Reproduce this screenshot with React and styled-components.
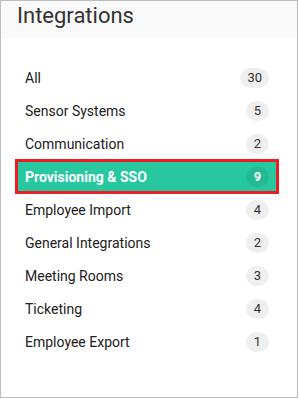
import React from "react";
import styled, { createGlobalStyle } from "styled-components";

const categories = [
  { name: "All", count: 30 },
  { name: "Sensor Systems", count: 5 },
  { name: "Communication", count: 2 },
  { name: "Provisioning & SSO", count: 9, active: true },
  { name: "Employee Import", count: 4 },
  { name: "General Integrations", count: 2 },
  { name: "Meeting Rooms", count: 3 },
  { name: "Ticketing", count: 4 },
  { name: "Employee Export", count: 1 },
];

function App() {
  return (
    <>
      <GlobalStyle />
      <S.Panel>
        <S.Header>
          <S.Title>Integrations</S.Title>
        </S.Header>
        <S.List>
          {categories.map((c) => (
            <S.Row key={c.name} active={c.active}>
              <S.Label>{c.name}</S.Label>
              <S.Badge active={c.active}>{c.count}</S.Badge>
            </S.Row>
          ))}
        </S.List>
      </S.Panel>
    </>
  );
}

const GlobalStyle = createGlobalStyle`
  body {
    margin: 0;
    background: #fff;
    font-family: Roboto, "Liberation Sans", sans-serif;
  }
`;

const S = {
  Panel: styled.div`
    width: 298px;
    height: 398px;
    box-sizing: border-box;
    border: 1px solid #bdbdbd;
    display: flex;
    flex-direction: column;
  `,
  Header: styled.div`
    height: 37px;
    box-sizing: border-box;
    background: #f9f9f9;
    padding: 0 0 8px 16px;
    display: flex;
    align-items: center;
  `,
  Title: styled.h1`
    margin: 0;
    font-size: 22px;
    line-height: 26px;
    font-weight: 400;
    color: #333;
  `,
  List: styled.ul`
    list-style: none;
    margin: 0;
    padding: 23px 19px 0 15px;
    display: flex;
    flex-direction: column;
  `,
  Row: styled.li`
    height: 33px;
    display: flex;
    align-items: center;
    justify-content: space-between;
    padding: 0 9px;
    font-size: 14px;
    color: ${(p) => (p.active ? "#fff" : "#212121")};
    font-weight: ${(p) => (p.active ? 700 : 400)};
    background: ${(p) => (p.active ? "#27c7a0" : "transparent")};
    outline: ${(p) => (p.active ? "3px solid #ee1c25" : "none")};
    outline-offset: -2px;
  `,
  Label: styled.span``,
  Badge: styled.span`
    min-width: 23px;
    height: 20px;
    box-sizing: border-box;
    padding: 0 7px;
    border-radius: 10px;
    display: inline-flex;
    align-items: center;
    justify-content: center;
    font-size: 13px;
    background: ${(p) => (p.active ? "#22bb96" : "#efefef")};
    color: ${(p) => (p.active ? "#fff" : "#333")};
  `,
};

export default App;
